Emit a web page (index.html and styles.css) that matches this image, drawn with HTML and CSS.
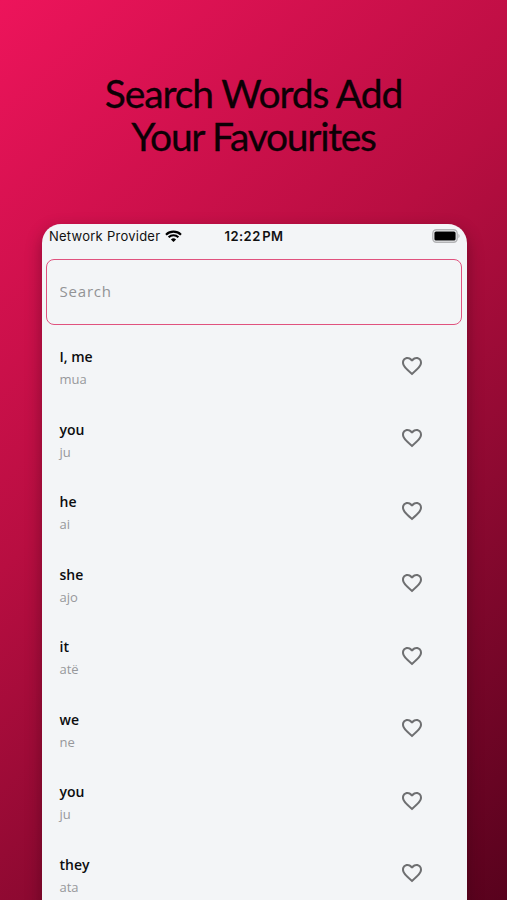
FILE: index.html
```html
<!DOCTYPE html>
<html lang="en">
<head>
    <meta charset="utf-8">
    <title>Search Words</title>
    <link rel="stylesheet" href="styles.css">
</head>

<body>
    <h1 class="headline"><span class="line1">Search Words Add</span><br><span class="line2">Your Favourites</span></h1>

    <!-- heart shape shared by all the rows -->
    <svg class="sprite">
        <symbol id="heart" viewBox="0 0 24 24">
            <path d="M16.5 3c-1.74 0-3.41.81-4.5 2.09C10.91 3.81 9.24 3 7.5 3 4.42 3 2 5.42 2 8.5c0 3.78 3.4 6.86 8.55 11.54L12 21.35l1.45-1.32C18.6 15.36 22 12.28 22 8.5 22 5.42 19.58 3 16.5 3zm-4.4 15.55l-.1.1-.1-.1C7.14 14.24 4 11.39 4 8.5 4 6.5 5.5 5 7.5 5c1.54 0 3.04.99 3.57 2.36h1.87C13.46 5.99 14.96 5 16.5 5c2 0 3.5 1.5 3.5 3.5 0 2.89-3.14 5.74-7.9 10.05z"/>
        </symbol>
    </svg>

    <div class="phone">
        <div class="statusBar">
            <div class="carrier">
                <span class="provider">Network Provider</span>
                <svg class="wifi" viewBox="0 0 17 12">
                    <path d="M1 4.7a10.8 10.8 0 0 1 15 0M3.6 7.3a7 7 0 0 1 9.8 0" fill="none" stroke="#000" stroke-width="2.1"/>
                    <path d="M8.5 12L5.9 9.4a3.8 3.8 0 0 1 5.2 0z"/>
                </svg>
            </div>
            <span class="time">12:22&#8202;PM</span>
            <svg class="battery" viewBox="0 0 28 14">
                <rect x=".8" y=".8" width="24.4" height="12.4" rx="3.6" fill="none" stroke="#b3b4b6" stroke-width="1.4"/>
                <rect x="2.4" y="2.4" width="21.2" height="9.2" rx="1.6"/>
                <path d="M26.4 4.8c1.6.8 1.6 3.6 0 4.4z" fill="#b3b4b6"/>
            </svg>
        </div>

        <input class="search" type="text" placeholder="Search">

        <ul class="words">
            <li class="word">
                <div class="texts"><p class="term">I, me</p><p class="translation">mua</p></div>
                <svg class="heart"><use href="#heart"/></svg>
            </li>
            <li class="word">
                <div class="texts"><p class="term">you</p><p class="translation">ju</p></div>
                <svg class="heart"><use href="#heart"/></svg>
            </li>
            <li class="word">
                <div class="texts"><p class="term">he</p><p class="translation">ai</p></div>
                <svg class="heart"><use href="#heart"/></svg>
            </li>
            <li class="word">
                <div class="texts"><p class="term">she</p><p class="translation">ajo</p></div>
                <svg class="heart"><use href="#heart"/></svg>
            </li>
            <li class="word">
                <div class="texts"><p class="term">it</p><p class="translation">atë</p></div>
                <svg class="heart"><use href="#heart"/></svg>
            </li>
            <li class="word">
                <div class="texts"><p class="term">we</p><p class="translation">ne</p></div>
                <svg class="heart"><use href="#heart"/></svg>
            </li>
            <li class="word">
                <div class="texts"><p class="term">you</p><p class="translation">ju</p></div>
                <svg class="heart"><use href="#heart"/></svg>
            </li>
            <li class="word">
                <div class="texts"><p class="term">they</p><p class="translation">ata</p></div>
                <svg class="heart"><use href="#heart"/></svg>
            </li>
        </ul>
    </div>
</body>

</html>
```

FILE: styles.css
```css
* {
    box-sizing: border-box;
}

body {
    margin: 0;
    height: 900px;
    overflow: hidden;
    background: linear-gradient(138deg, #ed145b 0%, #b80e41 42%, #8d0931 68%, #58021d 100%);
    font-family: "Open Sans", sans-serif;
}

.headline {
    margin: 0;
    padding-top: 72px;
    height: 224px;
    text-align: center;
    font-family: Lato, sans-serif;
    font-size: 39px;
    font-weight: 400;
    line-height: 43px;
    color: #0d0005;
    -webkit-text-stroke: 0.3px #0d0005;
}

.line1 {
    letter-spacing: -1.1px;
}

.line2 {
    letter-spacing: -1.3px;
}

.sprite {
    display: none;
}

.phone {
    width: 425px;
    height: 720px;
    margin-left: 41.5px;
    border-radius: 19px;
    background-color: #f3f5f7;
    box-shadow: 0 6px 16px rgba(40, 0, 15, 0.4);
}

.statusBar {
    display: grid;
    grid-template-columns: 1fr auto 1fr;
    align-items: center;
    height: 24px;
    padding: 0 6.5px 0 7.5px;
    font-family: Inter, sans-serif;
    font-size: 13px;
    color: #111;
}

.carrier {
    display: flex;
    align-items: center;
    gap: 5px;
    white-space: nowrap;
}

.provider {
    letter-spacing: 0.25px;
}

.wifi {
    width: 17px;
    height: 12px;
}

.time {
    font-weight: 600;
    letter-spacing: 0.45px;
    margin-right: 1px;
}

.battery {
    width: 28px;
    height: 14px;
    justify-self: end;
}

.search {
    display: block;
    width: 416px;
    height: 66px;
    margin: 11px 0 0 4px;
    padding: 0 13px 2px;
    border: 1.5px solid #e0527e;
    border-radius: 8px;
    background: none;
    font-family: "Open Sans", sans-serif;
    font-size: 15px;
    letter-spacing: 0.8px;
}

.search::placeholder {
    color: #929395;
}

.words {
    list-style: none;
    margin: 4.4px 0 0;
    padding: 0;
}

.word {
    display: flex;
    justify-content: space-between;
    align-items: center;
    height: 72.5px;
    padding: 0 42.6px 0 18px;
}

.texts {
    padding-top: 5px;
}

.term,
.translation {
    margin: 0;
    line-height: 23px;
}

.term {
    font-size: 14px;
    font-weight: 600;
    color: #0c0d0f;
}

.translation {
    font-size: 13px;
    color: #97989b;
}

.heart {
    width: 24px;
    height: 24px;
    fill: #6e6f71;
}
```
